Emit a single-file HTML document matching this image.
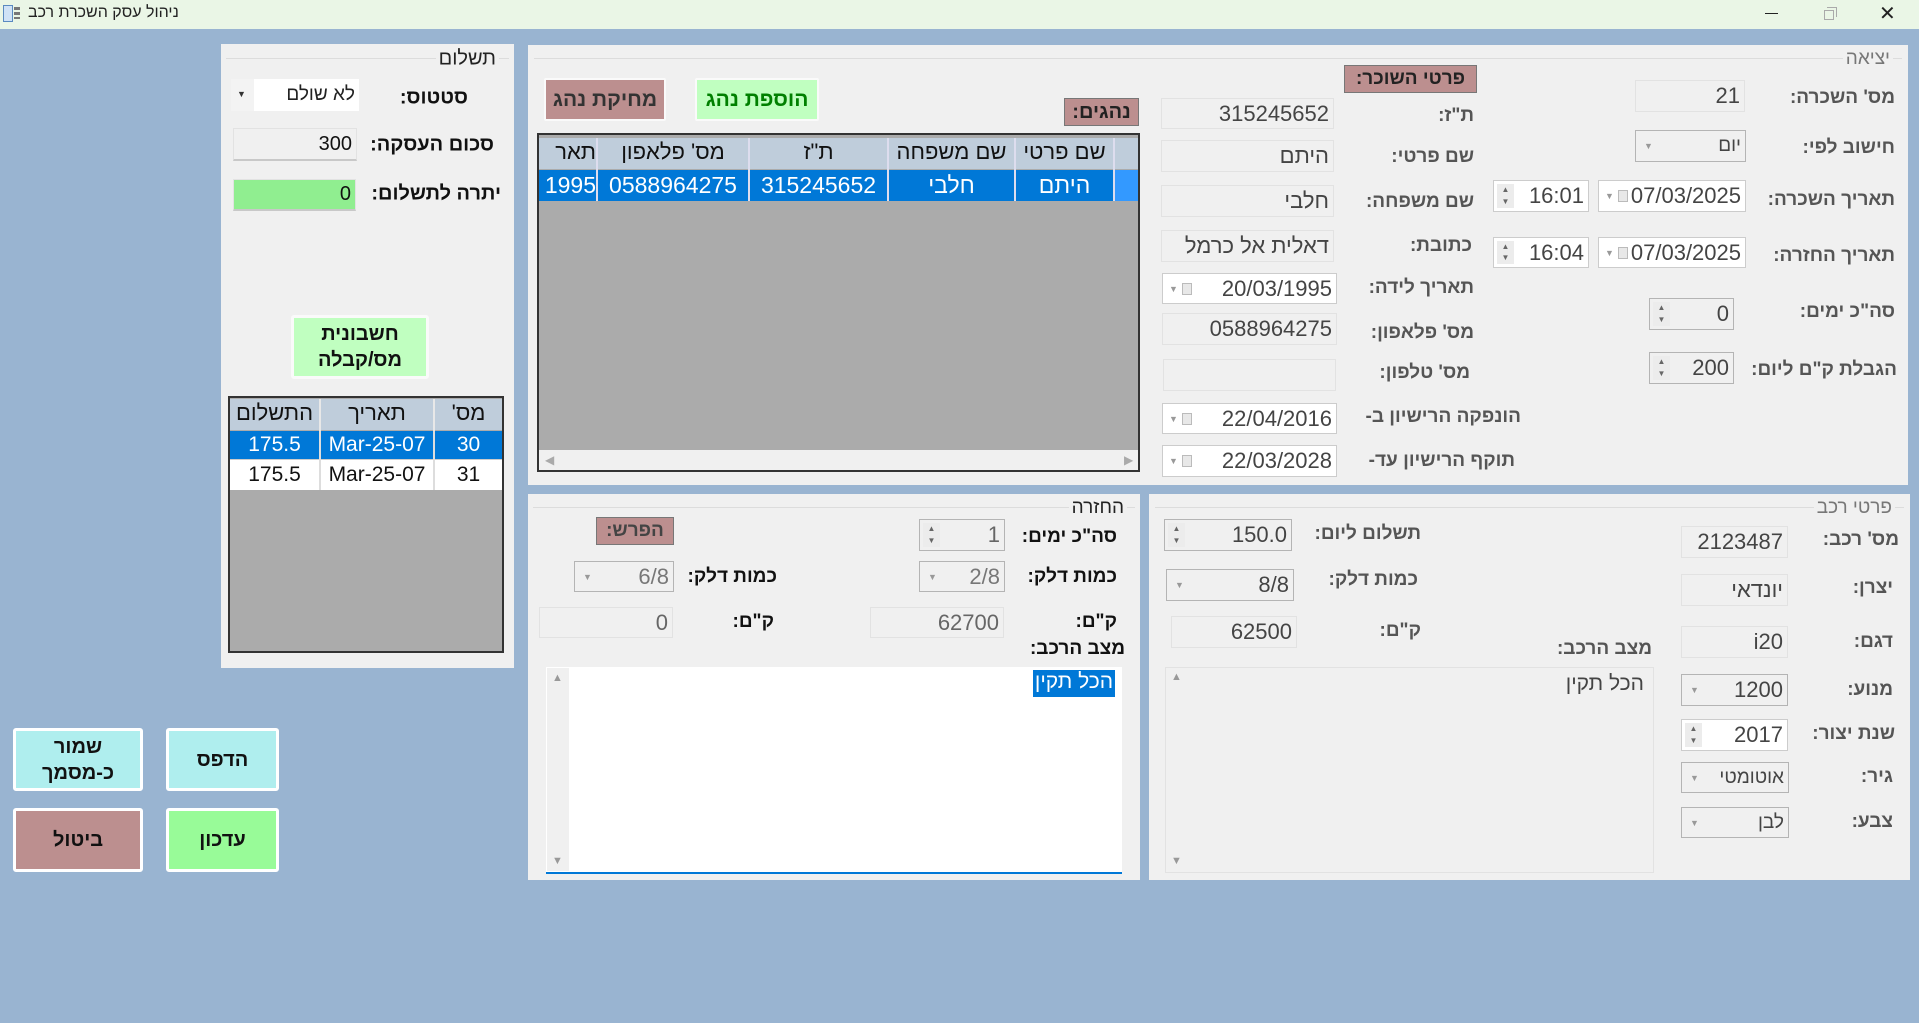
<!DOCTYPE html>
<html><head><meta charset="utf-8">
<style>
*{margin:0;padding:0;box-sizing:border-box}
body{width:1919px;height:1023px;overflow:hidden;background:#99b4d1;font-family:"Liberation Sans","DejaVu Sans",sans-serif;position:relative}
.a{position:absolute}
.panel{position:absolute;background:#f0f0f0}
.gl{position:absolute;height:1px;background:#dcdcdc}
.gt{position:absolute;font-size:19px;color:#777;direction:rtl;white-space:nowrap;background:#f0f0f0;padding:0 3px;transform:translateY(-50%)}
.lbl{position:absolute;white-space:nowrap;direction:rtl;font-weight:bold;font-size:19px;color:#555;transform:translateY(-50%)}
.lb{color:#111}
.fld{position:absolute;background:#f0f0f0;border:1px solid #e2e2e2;font-size:22px;color:#444;text-align:right;padding-right:4px;white-space:nowrap;overflow:hidden;display:flex;align-items:center;justify-content:flex-end}
.wh{background:#fff;border:1px solid #b4b4b4}
.gb{border:1px solid #b4b4b4}
.sp{position:absolute;left:3px;top:3px;bottom:3px;width:17px;background:#ececec;font-size:8px;color:#666;display:flex;flex-direction:column;justify-content:space-around;align-items:center;line-height:1}
.dd{position:absolute;left:8px;top:50%;transform:translateY(-50%);font-size:9px;color:#999}
.cal{position:absolute;left:19px;top:50%;transform:translateY(-50%);width:10px;height:12px;border:1px solid #bbb;background:#e8e8e8}
.box{position:absolute;background:#bc8f8f;border:1px solid #777;font-weight:bold;font-size:19px;color:#222;display:flex;align-items:center;justify-content:center;direction:rtl}
.btn{position:absolute;border:3px solid #fff;border-radius:3px;font-weight:bold;font-size:20px;color:#111;display:flex;align-items:center;justify-content:center;text-align:center;line-height:1.3;direction:rtl}
</style></head><body>

<!-- title bar -->
<div class="a" style="left:0;top:0;width:1919px;height:29px;background:#eaf6e6"></div>
<div class="a" style="left:3px;top:5px;width:10px;height:17px;border:1px solid #5a8ac0;background:#cfe2f6"></div>
<div class="a" style="left:14px;top:7px;width:6px;height:12px;background:repeating-linear-gradient(#777 0 3px,transparent 3px 5px)"></div>
<div class="a" style="left:28px;top:4px;font-size:16px;color:#222;direction:rtl">ניהול עסק השכרת רכב</div>
<div class="a" style="left:1765px;top:13px;width:13px;height:1px;background:#222"></div>
<div class="a" style="left:1824px;top:10px;width:10px;height:10px;border:1px solid #aaa"></div>
<div class="a" style="left:1827px;top:7px;width:10px;height:10px;border-top:1px solid #aaa;border-right:1px solid #aaa"></div>
<div class="a" style="left:1879px;top:1px;font-size:20px;color:#222">✕</div>

<!-- payment panel -->
<div class="panel" style="left:221px;top:44px;width:293px;height:624px"></div>
<div class="gl" style="left:226px;top:58px;width:283px"></div>
<div class="gt" style="right:1420px;top:59px;color:#222;font-size:20px">תשלום</div>
<div class="lbl lb" style="right:1451px;top:98px;font-size:20px">סטטוס:</div>
<div class="fld" style="left:231px;top:79px;width:128px;height:32px;background:#fff;border:none;font-size:19px;color:#222">לא שולם</div>
<div class="a" style="left:231px;top:79px;width:23px;height:32px;background:#f3f3f3"></div>
<div class="a" style="left:237px;top:89px;font-size:9px;color:#333">▼</div>
<div class="lbl lb" style="right:1425px;top:145px;font-size:20px">סכום העסקה:</div>
<div class="fld" style="left:233px;top:128px;width:124px;height:33px;border-bottom:2px solid #c8c8c8;color:#111;font-size:20px">300</div>
<div class="lbl lb" style="right:1418px;top:194px;font-size:20px">יתרה לתשלום:</div>
<div class="fld" style="left:233px;top:179px;width:123px;height:32px;background:#90ee90;border-bottom:2px solid #c8c8c8;color:#111;font-size:20px">0</div>
<div class="btn" style="left:291px;top:315px;width:138px;height:64px;background:#c0ffc0;border-color:#fafafa">חשבונית<br>מס/קבלה</div>
<!-- payment table -->
<div class="a" style="left:228px;top:396px;width:276px;height:257px;background:#ababab;border:2px solid #333"></div>
<div class="a" style="left:230px;top:399px;width:272px;height:31px;background:#bfcddb"></div>
<div class="a" style="left:319px;top:399px;width:2px;height:91px;background:#e8e8e8"></div>
<div class="a" style="left:433px;top:399px;width:2px;height:91px;background:#e8e8e8"></div>
<div class="a" style="left:435px;top:400px;width:67px;text-align:center;font-size:22px;direction:rtl;color:#111">מס'</div>
<div class="a" style="left:321px;top:400px;width:112px;text-align:center;font-size:22px;color:#111">תאריך</div>
<div class="a" style="left:230px;top:400px;width:89px;text-align:center;font-size:22px;color:#111">התשלום</div>
<div class="a" style="left:230px;top:431px;width:272px;height:28px;background:#0078d7"></div>
<div class="a" style="left:230px;top:459px;width:272px;height:31px;background:#fff"></div>
<div class="a" style="left:230px;top:459px;width:272px;height:1px;background:#ccc"></div>
<div class="a" style="left:319px;top:431px;width:2px;height:59px;background:#ddd"></div>
<div class="a" style="left:433px;top:431px;width:2px;height:59px;background:#ddd"></div>
<div class="a" style="left:435px;top:433px;width:67px;text-align:center;font-size:21px;color:#fff">30</div>
<div class="a" style="left:321px;top:433px;width:112px;text-align:center;font-size:21px;color:#fff">Mar-25-07</div>
<div class="a" style="left:230px;top:433px;width:89px;text-align:center;font-size:21px;color:#fff">175.5</div>
<div class="a" style="left:435px;top:463px;width:67px;text-align:center;font-size:21px;color:#111">31</div>
<div class="a" style="left:321px;top:463px;width:112px;text-align:center;font-size:21px;color:#111">Mar-25-07</div>
<div class="a" style="left:230px;top:463px;width:89px;text-align:center;font-size:21px;color:#111">175.5</div>

<!-- left buttons -->
<div class="btn" style="left:13px;top:728px;width:130px;height:63px;background:#afeeee">שמור<br>כ-מסמך</div>
<div class="btn" style="left:166px;top:728px;width:113px;height:63px;background:#afeeee">הדפס</div>
<div class="btn" style="left:13px;top:808px;width:130px;height:64px;background:#bc8f8f">ביטול</div>
<div class="btn" style="left:166px;top:808px;width:113px;height:64px;background:#98fb98">עדכון</div>

<!-- top main panel -->
<div class="panel" style="left:528px;top:45px;width:1380px;height:440px"></div>
<div class="gl" style="left:534px;top:58px;width:1368px"></div>
<div class="gt" style="right:26px;top:59px">יציאה</div>

<div class="lbl" style="right:24px;top:98px">מס' השכרה:</div>
<div class="fld" style="left:1635px;top:80px;width:110px;height:32px">21</div>
<div class="lbl" style="right:24px;top:148px">חישוב לפי:</div>
<div class="fld gb" style="left:1635px;top:130px;width:111px;height:32px;font-size:19px">יום<span class="dd">▼</span></div>
<div class="lbl" style="right:24px;top:200px">תאריך השכרה:</div>
<div class="fld wh" style="left:1598px;top:180px;width:148px;height:32px;border-color:#ccc">07/03/2025<span class="dd" style="left:6px">▼</span><span class="cal"></span></div>
<div class="fld wh" style="left:1493px;top:180px;width:96px;height:32px;border-color:#ccc">16:01<span class="sp"><span>▲</span><span>▼</span></span></div>
<div class="lbl" style="right:24px;top:256px">תאריך החזרה:</div>
<div class="fld wh" style="left:1598px;top:237px;width:148px;height:31px;border-color:#ccc">07/03/2025<span class="dd" style="left:6px">▼</span><span class="cal"></span></div>
<div class="fld wh" style="left:1493px;top:237px;width:96px;height:31px;border-color:#ccc">16:04<span class="sp"><span>▲</span><span>▼</span></span></div>
<div class="lbl" style="right:24px;top:312px">סה"כ ימים:</div>
<div class="fld gb" style="left:1649px;top:298px;width:85px;height:32px">0<span class="sp"><span>▲</span><span>▼</span></span></div>
<div class="lbl" style="right:22px;top:370px">הגבלת ק"ם ליום:</div>
<div class="fld gb" style="left:1649px;top:352px;width:85px;height:32px">200<span class="sp"><span>▲</span><span>▼</span></span></div>

<div class="box" style="left:1344px;top:65px;width:133px;height:28px">פרטי השוכר:</div>
<div class="lbl" style="right:445px;top:116px">ת"ז:</div>
<div class="fld" style="left:1161px;top:98px;width:173px;height:31px">315245652</div>
<div class="lbl" style="right:445px;top:157px">שם פרטי:</div>
<div class="fld" style="left:1161px;top:140px;width:173px;height:32px">היתם</div>
<div class="lbl" style="right:445px;top:202px">שם משפחה:</div>
<div class="fld" style="left:1161px;top:185px;width:173px;height:32px">חלבי</div>
<div class="lbl" style="right:447px;top:246px">כתובת:</div>
<div class="fld" style="left:1161px;top:230px;width:173px;height:32px">דאלית אל כרמל</div>
<div class="lbl" style="right:445px;top:288px">תאריך לידה:</div>
<div class="fld wh" style="left:1162px;top:273px;width:175px;height:31px;border-color:#ccc">20/03/1995<span class="dd" style="left:6px">▼</span><span class="cal"></span></div>
<div class="lbl" style="right:445px;top:333px">מס' פלאפון:</div>
<div class="fld" style="left:1162px;top:313px;width:175px;height:32px">0588964275</div>
<div class="lbl" style="right:449px;top:373px">מס' טלפון:</div>
<div class="fld" style="left:1163px;top:359px;width:173px;height:32px"></div>
<div class="lbl" style="right:398px;top:417px">הונפקה הרישיון ב-</div>
<div class="fld wh" style="left:1162px;top:403px;width:175px;height:31px;border-color:#ccc">22/04/2016<span class="dd" style="left:6px">▼</span><span class="cal"></span></div>
<div class="lbl" style="right:404px;top:461px">תוקף הרישיון עד-</div>
<div class="fld wh" style="left:1162px;top:445px;width:175px;height:32px;border-color:#ccc">22/03/2028<span class="dd" style="left:6px">▼</span><span class="cal"></span></div>

<!-- drivers -->
<div class="box" style="left:1064px;top:98px;width:75px;height:28px;font-size:20px">נהגים:</div>
<div class="btn" style="left:544px;top:78px;width:122px;height:43px;background:#bc8f8f;border-width:2px;border-color:#fafafa;border-radius:2px;font-size:21px;color:#333">מחיקת נהג</div>
<div class="btn" style="left:695px;top:78px;width:124px;height:43px;background:#c0ffc0;border-width:2px;border-color:#fafafa;border-radius:2px;font-size:21px;color:#008000">הוספת נהג</div>
<div class="a" style="left:537px;top:133px;width:603px;height:339px;background:#ababab;border:2px solid #333;overflow:hidden">
  <div class="a" style="left:0;top:3px;width:601px;height:31px;background:#bfcddb"></div>
  <div class="a" style="left:0;top:35px;width:601px;height:31px;background:#0078d7"></div>
  <div class="a" style="left:575px;top:35px;width:24px;height:31px;background:#3399ff"></div>
  <div class="a" style="left:57px;top:3px;width:2px;height:63px;background:#dde"></div>
  <div class="a" style="left:209px;top:3px;width:2px;height:63px;background:#dde"></div>
  <div class="a" style="left:348px;top:3px;width:2px;height:63px;background:#dde"></div>
  <div class="a" style="left:475px;top:3px;width:2px;height:63px;background:#dde"></div>
  <div class="a" style="left:574px;top:3px;width:2px;height:63px;background:#dde"></div>
  <div class="a" style="left:0;top:4px;width:57px;text-align:right;font-size:22px;color:#111;direction:rtl;white-space:nowrap;overflow:hidden">תאר</div>
  <div class="a" style="left:59px;top:4px;width:150px;text-align:center;font-size:22px;color:#111;direction:rtl">מס' פלאפון</div>
  <div class="a" style="left:211px;top:4px;width:137px;text-align:center;font-size:22px;color:#111">ת"ז</div>
  <div class="a" style="left:350px;top:4px;width:125px;text-align:center;font-size:22px;color:#111">שם משפחה</div>
  <div class="a" style="left:477px;top:4px;width:97px;text-align:center;font-size:22px;color:#111">שם פרטי</div>
  <div class="a" style="left:-14px;top:37px;width:71px;text-align:right;font-size:23px;color:#fff">1995</div>
  <div class="a" style="left:59px;top:37px;width:150px;text-align:center;font-size:23px;color:#fff">0588964275</div>
  <div class="a" style="left:211px;top:37px;width:137px;text-align:center;font-size:23px;color:#fff">315245652</div>
  <div class="a" style="left:350px;top:37px;width:125px;text-align:center;font-size:23px;color:#fff">חלבי</div>
  <div class="a" style="left:477px;top:37px;width:97px;text-align:center;font-size:23px;color:#fff">היתם</div>
  <div class="a" style="left:0;top:315px;width:601px;height:22px;background:#f0f0f0"></div>
  <div class="a" style="left:6px;top:318px;font-size:12px;color:#aaa">◀</div>
  <div class="a" style="left:585px;top:318px;font-size:12px;color:#aaa">▶</div>
</div>

<!-- return panel -->
<div class="panel" style="left:528px;top:494px;width:612px;height:386px"></div>
<div class="gl" style="left:533px;top:507px;width:602px"></div>
<div class="gt" style="right:792px;top:508px;color:#222">החזרה</div>
<div class="lbl lb" style="right:802px;top:537px">סה"כ ימים:</div>
<div class="fld gb" style="left:919px;top:519px;width:86px;height:32px;color:#666">1<span class="sp"><span>▲</span><span>▼</span></span></div>
<div class="box" style="left:596px;top:517px;width:78px;height:28px;color:#444">הפרש:</div>
<div class="lbl lb" style="right:802px;top:577px">כמות דלק:</div>
<div class="fld gb" style="left:919px;top:561px;width:86px;height:31px;color:#777">2/8<span class="dd">▼</span></div>
<div class="lbl lb" style="right:1142px;top:577px">כמות דלק:</div>
<div class="fld gb" style="left:574px;top:561px;width:100px;height:31px;color:#777">6/8<span class="dd">▼</span></div>
<div class="lbl lb" style="right:802px;top:622px">ק"ם:</div>
<div class="fld" style="left:870px;top:607px;width:134px;height:31px;color:#666">62700</div>
<div class="lbl lb" style="right:1145px;top:622px">ק"ם:</div>
<div class="fld" style="left:539px;top:607px;width:134px;height:31px;color:#666">0</div>
<div class="lbl lb" style="right:794px;top:649px">מצב הרכב:</div>
<div class="a" style="left:546px;top:667px;width:576px;height:207px;background:#fff;border-bottom:2px solid #0078d7"></div>
<div class="a" style="left:547px;top:668px;width:22px;height:203px;background:#f0f0f0"></div>
<div class="a" style="left:552px;top:672px;font-size:11px;color:#999">▲</div>
<div class="a" style="left:552px;top:855px;font-size:11px;color:#999">▼</div>
<div class="a" style="left:1033px;top:670px;width:82px;height:27px;background:#0078d7;color:#fff;font-size:21px;text-align:center;direction:rtl">הכל תקין</div>

<!-- car details panel -->
<div class="panel" style="left:1149px;top:494px;width:761px;height:386px"></div>
<div class="gl" style="left:1155px;top:507px;width:749px"></div>
<div class="gt" style="right:24px;top:508px">פרטי רכב</div>
<div class="lbl" style="right:20px;top:540px">מס' רכב:</div>
<div class="fld" style="left:1681px;top:526px;width:107px;height:32px">2123487</div>
<div class="lbl" style="right:26px;top:588px">יצרן:</div>
<div class="fld" style="left:1681px;top:574px;width:107px;height:32px">יונדאי</div>
<div class="lbl" style="right:26px;top:642px">דגם:</div>
<div class="fld" style="left:1681px;top:626px;width:107px;height:32px">i20</div>
<div class="lbl" style="right:26px;top:690px">מנוע:</div>
<div class="fld gb" style="left:1681px;top:674px;width:107px;height:32px">1200<span class="dd">▼</span></div>
<div class="lbl" style="right:24px;top:734px">שנת יצור:</div>
<div class="fld wh" style="left:1681px;top:719px;width:107px;height:32px;border-color:#ccc">2017<span class="sp"><span>▲</span><span>▼</span></span></div>
<div class="lbl" style="right:26px;top:777px">גיר:</div>
<div class="fld gb" style="left:1681px;top:762px;width:108px;height:31px;font-size:19px">אוטומטי<span class="dd">▼</span></div>
<div class="lbl" style="right:26px;top:822px">צבע:</div>
<div class="fld gb" style="left:1681px;top:807px;width:108px;height:31px;font-size:19px">לבן<span class="dd">▼</span></div>
<div class="lbl" style="right:498px;top:534px">תשלום ליום:</div>
<div class="fld gb" style="left:1164px;top:519px;width:128px;height:32px">150.0<span class="sp"><span>▲</span><span>▼</span></span></div>
<div class="lbl" style="right:501px;top:580px">כמות דלק:</div>
<div class="fld gb" style="left:1166px;top:569px;width:128px;height:32px">8/8<span class="dd">▼</span></div>
<div class="lbl" style="right:498px;top:631px">ק"ם:</div>
<div class="fld" style="left:1171px;top:616px;width:126px;height:32px">62500</div>
<div class="lbl" style="right:267px;top:649px">מצב הרכב:</div>
<div class="a" style="left:1165px;top:667px;width:489px;height:206px;border:1px solid #e2e2e2"></div>
<div class="a" style="left:1171px;top:671px;font-size:11px;color:#999">▲</div>
<div class="a" style="left:1171px;top:855px;font-size:11px;color:#999">▼</div>
<div class="a" style="right:275px;top:672px;font-size:21px;color:#444;direction:rtl">הכל תקין</div>

</body></html>
